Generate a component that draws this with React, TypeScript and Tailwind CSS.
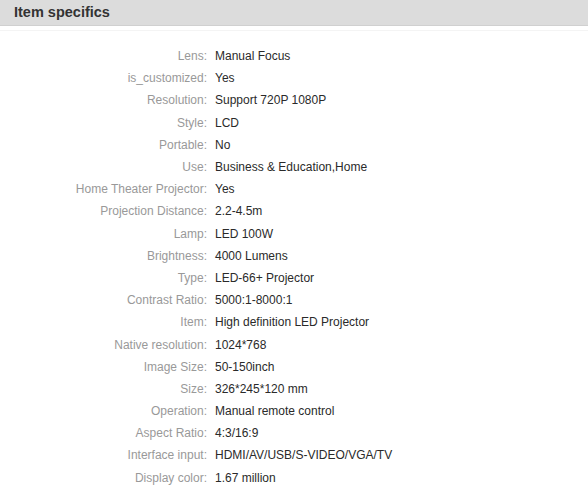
const specs: [string, string][] = [
  ["Lens", "Manual Focus"],
  ["is_customized", "Yes"],
  ["Resolution", "Support 720P 1080P"],
  ["Style", "LCD"],
  ["Portable", "No"],
  ["Use", "Business & Education,Home"],
  ["Home Theater Projector", "Yes"],
  ["Projection Distance", "2.2-4.5m"],
  ["Lamp", "LED 100W"],
  ["Brightness", "4000 Lumens"],
  ["Type", "LED-66+ Projector"],
  ["Contrast Ratio", "5000:1-8000:1"],
  ["Item", "High definition LED Projector"],
  ["Native resolution", "1024*768"],
  ["Image Size", "50-150inch"],
  ["Size", "326*245*120 mm"],
  ["Operation", "Manual remote control"],
  ["Aspect Ratio", "4:3/16:9"],
  ["Interface input", "HDMI/AV/USB/S-VIDEO/VGA/TV"],
  ["Display color", "1.67 million"],
];

export default function App() {
  return (
    <div className="w-[588px] h-[489px] bg-white overflow-hidden font-['Liberation_Sans',Arial,sans-serif]">
      {/* Header bar */}
      <div className="h-[26px] bg-[#dcdcdc] border-b border-[#d0d0d0] pl-[14px] flex items-center">
        <h2 className="text-[14.5px] font-bold text-[#333]">Item specifics</h2>
      </div>
      <div className="h-[5px] border-b border-[#f4f4f4]" />

      {/* Specs list */}
      <div className="pt-[14px]">
        {specs.map(([label, value]) => (
          <div key={label} className="flex h-[22.2px] items-center text-[12px]">
            <div className="w-[207px] text-right text-[#999]">{label}:</div>
            <div className="pl-[8px] text-[#2a2a2a]">{value}</div>
          </div>
        ))}
      </div>
    </div>
  );
}
